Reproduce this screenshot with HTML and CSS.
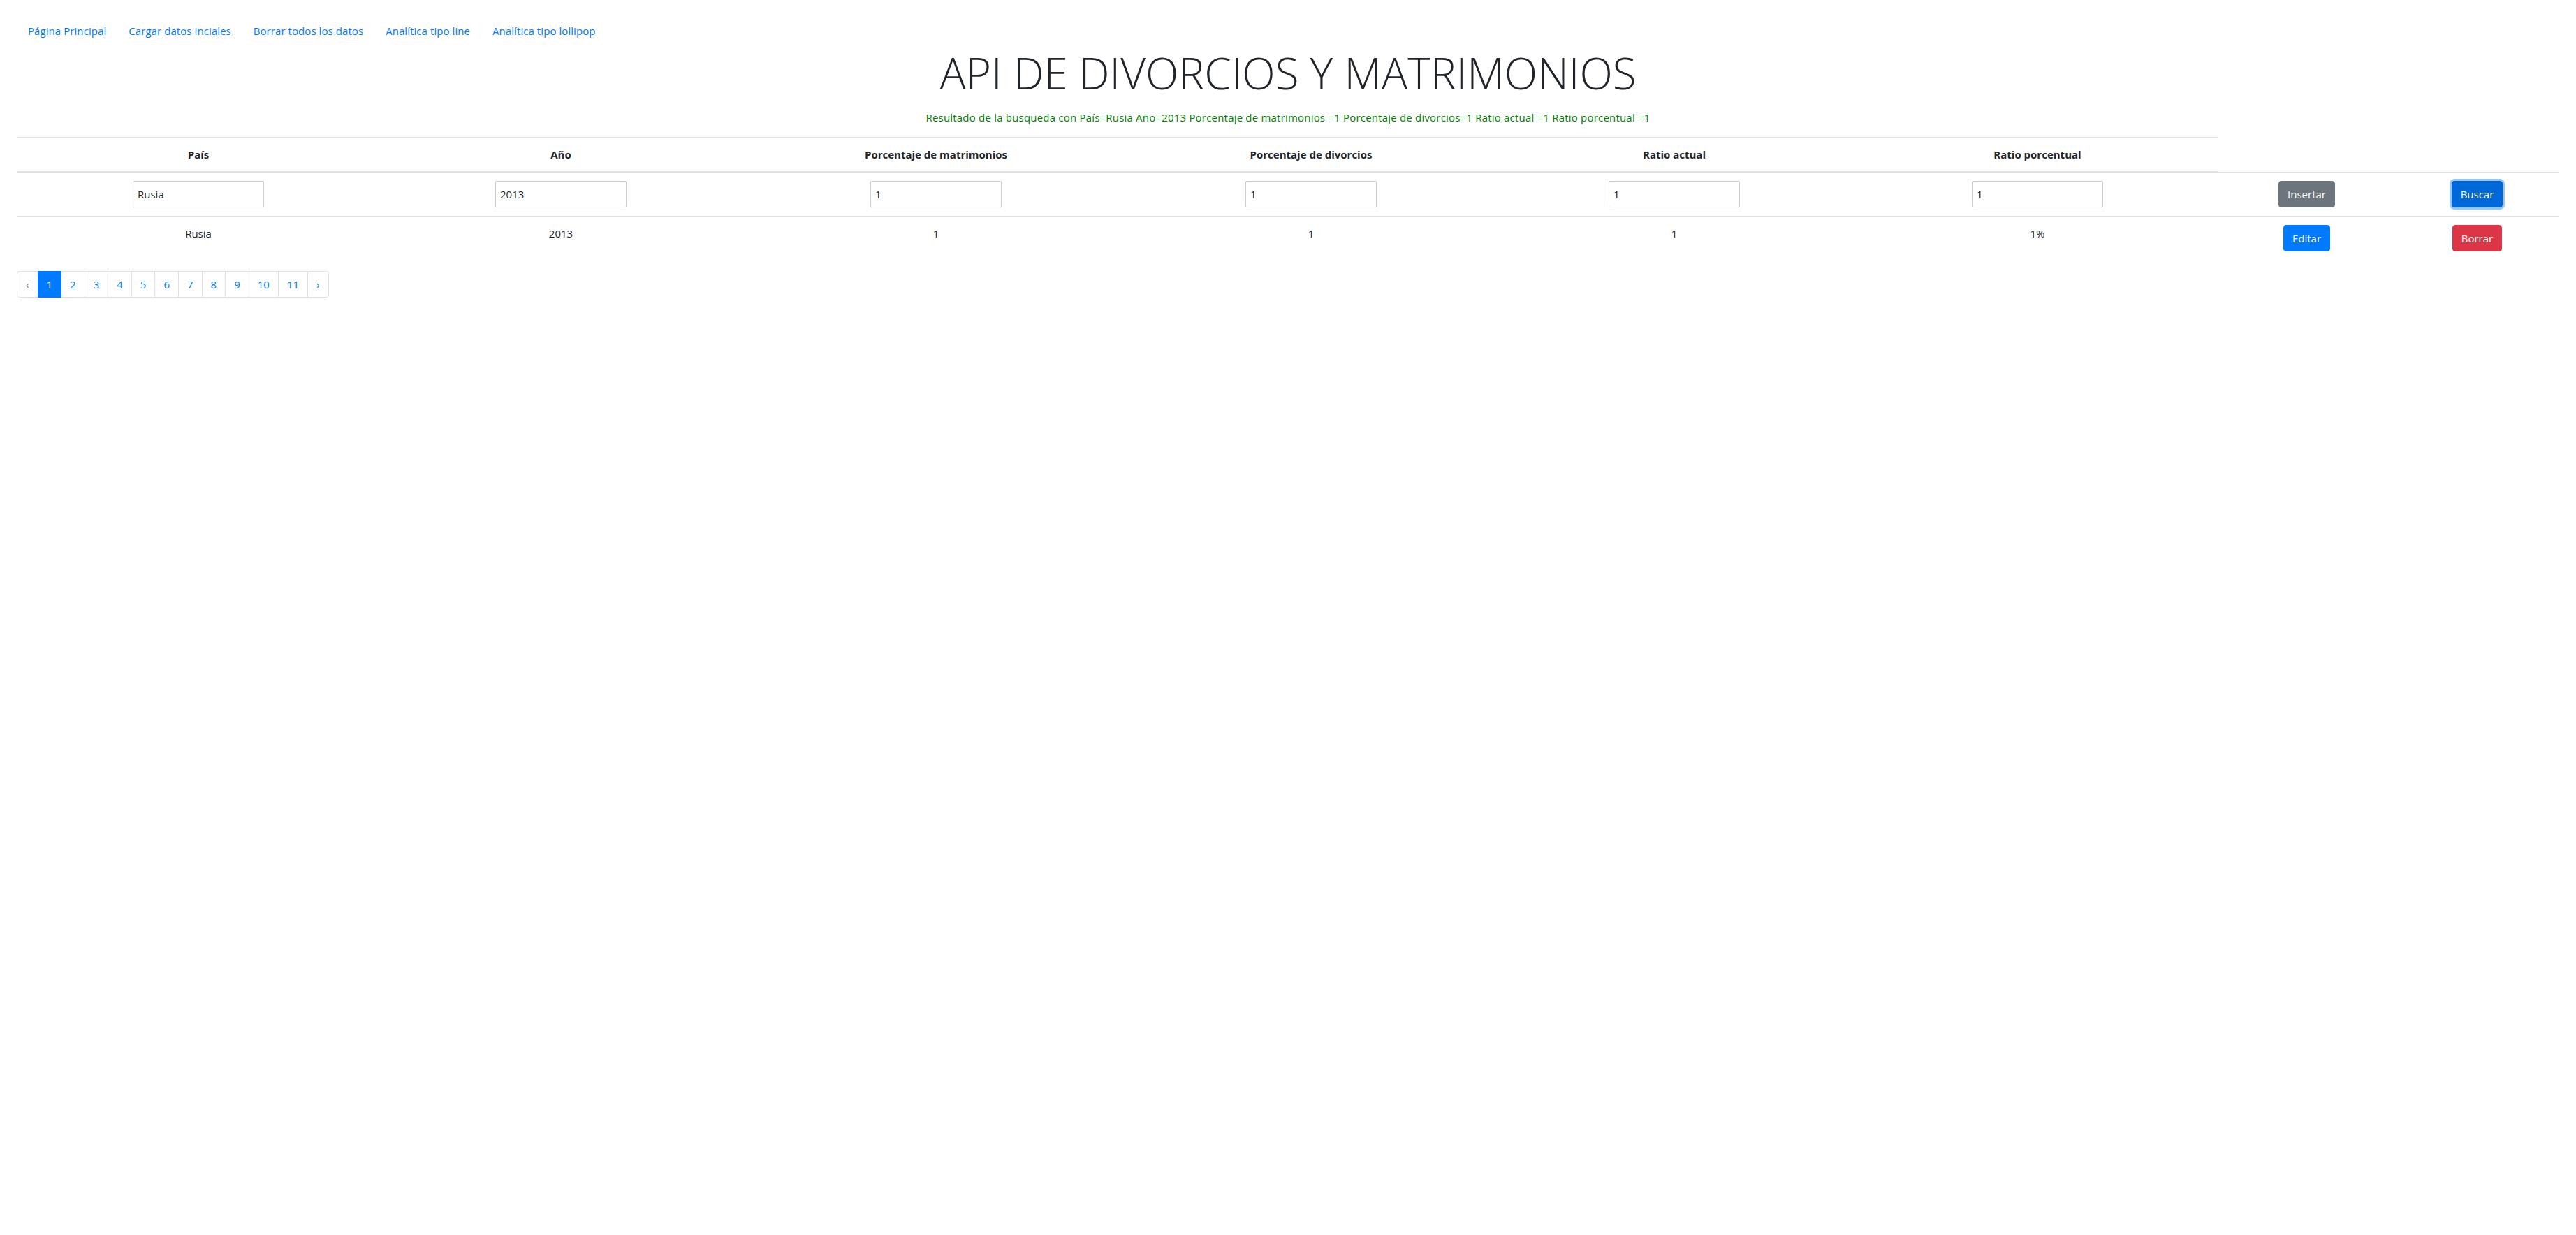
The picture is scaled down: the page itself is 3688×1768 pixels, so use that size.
FILE: index.html
```html
<!DOCTYPE html>
<html lang="es">
<head>
<meta charset="utf-8">
<title>API de divorcios y matrimonios</title>
<link rel="stylesheet" href="styles.css">
</head>
<body>
<main class="page">
  <nav class="nav">
    <a class="nav-link" href="#">Página Principal</a>
    <a class="nav-link" href="#">Cargar datos inciales</a>
    <a class="nav-link" href="#">Borrar todos los datos</a>
    <a class="nav-link" href="#">Analítica tipo line</a>
    <a class="nav-link" href="#">Analítica tipo lollipop</a>
  </nav>

  <h1 class="title">API DE DIVORCIOS Y MATRIMONIOS</h1>
  <p class="result">Resultado de la busqueda con País=Rusia Año=2013 Porcentaje de matrimonios =1 Porcentaje de divorcios=1 Ratio actual =1 Ratio porcentual =1</p>

  <table class="data-table">
    <colgroup>
      <col class="col-pais">
      <col class="col-anio">
      <col class="col-mat">
      <col class="col-div">
      <col class="col-ract">
      <col class="col-rpor">
      <col class="col-act1">
      <col class="col-act2">
    </colgroup>
    <thead>
      <tr>
        <th>País</th>
        <th>Año</th>
        <th>Porcentaje de matrimonios</th>
        <th>Porcentaje de divorcios</th>
        <th>Ratio actual</th>
        <th>Ratio porcentual</th>
      </tr>
    </thead>
    <tbody>
      <tr>
        <td><input class="field" type="text" value="Rusia"></td>
        <td><input class="field" type="text" value="2013"></td>
        <td><input class="field" type="text" value="1"></td>
        <td><input class="field" type="text" value="1"></td>
        <td><input class="field" type="text" value="1"></td>
        <td><input class="field" type="text" value="1"></td>
        <td><button class="btn btn-secondary" type="button">Insertar</button></td>
        <td><button class="btn btn-primary btn-focus" type="button">Buscar</button></td>
      </tr>
      <tr>
        <td>Rusia</td>
        <td>2013</td>
        <td>1</td>
        <td>1</td>
        <td>1</td>
        <td>1%</td>
        <td><button class="btn btn-primary" type="button">Editar</button></td>
        <td><button class="btn btn-danger" type="button">Borrar</button></td>
      </tr>
    </tbody>
  </table>

  <ul class="pagination">
    <li class="page-item disabled"><a class="page-link" href="#">‹</a></li>
    <li class="page-item active"><a class="page-link" href="#">1</a></li>
    <li class="page-item"><a class="page-link" href="#">2</a></li>
    <li class="page-item"><a class="page-link" href="#">3</a></li>
    <li class="page-item"><a class="page-link" href="#">4</a></li>
    <li class="page-item"><a class="page-link" href="#">5</a></li>
    <li class="page-item"><a class="page-link" href="#">6</a></li>
    <li class="page-item"><a class="page-link" href="#">7</a></li>
    <li class="page-item"><a class="page-link" href="#">8</a></li>
    <li class="page-item"><a class="page-link" href="#">9</a></li>
    <li class="page-item"><a class="page-link" href="#">10</a></li>
    <li class="page-item"><a class="page-link" href="#">11</a></li>
    <li class="page-item"><a class="page-link" href="#">›</a></li>
  </ul>
</main>
</body>
</html>
```

FILE: styles.css
```css
* {
  box-sizing: border-box;
}

html, body {
  margin: 0;
  padding: 0;
  background: #fff;
}

body {
  font-family: "Open Sans", "Noto Sans", sans-serif;
  font-size: 15px;
  line-height: 24px;
  color: #212529;
}

.page {
  padding: 24px 24px 0 24px;
}

/* navigation */
.nav {
  display: flex;
  flex-wrap: wrap;
}

.nav-link {
  display: block;
  padding: 8px 16px;
  line-height: 24px;
  letter-spacing: 0.07px;
  color: #007bff;
  text-decoration: none;
}

/* heading */
.title {
  margin: 3px 0 0 0;
  font-size: 62px;
  font-weight: 300;
  line-height: 1.2;
  text-align: center;
  color: #212529;
}

.result {
  margin: 15px 0 16px 0;
  text-align: center;
  letter-spacing: 0.2px;
  color: #008000;
}

/* table */
.data-table {
  width: 100%;
  border-collapse: collapse;
  table-layout: fixed;
  margin-bottom: 16px;
  color: #212529;
}

.col-pais { width: 520px; }
.col-anio { width: 518px; }
.col-mat  { width: 556px; }
.col-div  { width: 518px; }
.col-ract { width: 522px; }
.col-rpor { width: 518px; }
.col-act1 { width: 253px; }
.col-act2 { width: 235px; }

.data-table th,
.data-table td {
  padding: 12px;
  border-top: 1px solid #dee2e6;
  text-align: center;
  vertical-align: top;
  line-height: 24px;
}

.data-table thead th {
  font-weight: 700;
  border-bottom: 2px solid #dee2e6;
}

.field {
  display: inline-block;
  vertical-align: top;
  width: 188px;
  height: 38px;
  margin: 0;
  padding: 0 6px;
  border: 1px solid #ccc;
  border-radius: 2px;
  font-family: inherit;
  font-size: 15px;
  color: #212529;
  background: #fff;
}

/* buttons */
.btn {
  display: inline-block;
  vertical-align: top;
  height: 38px;
  margin: 0;
  padding: 0 12px;
  border: 1px solid transparent;
  border-radius: 4px;
  font-family: inherit;
  font-size: 15px;
  line-height: 36px;
  color: #fff;
  cursor: pointer;
}

.btn-secondary {
  background: #6c757d;
  border-color: #6c757d;
}

.btn-primary {
  background: #007bff;
  border-color: #007bff;
}

.btn-focus {
  background: #0069d9;
  border-color: #0062cc;
  box-shadow: 0 0 0 3px rgba(38, 143, 255, 0.5);
}

.btn-danger {
  background: #dc3545;
  border-color: #dc3545;
}

/* pagination */
.pagination {
  display: flex;
  list-style: none;
  margin: 0;
  padding: 0;
}

.page-link {
  display: block;
  margin-left: -1px;
  padding: 8px 12px;
  line-height: 20px;
  border: 1px solid #dee2e6;
  color: #007bff;
  background: #fff;
  text-decoration: none;
}

.page-item:first-child .page-link {
  margin-left: 0;
  border-radius: 4px 0 0 4px;
}

.page-item:last-child .page-link {
  border-radius: 0 4px 4px 0;
}

.page-item.disabled .page-link {
  color: #6c757d;
}

.page-item.active .page-link {
  position: relative;
  z-index: 1;
  color: #fff;
  background: #007bff;
  border-color: #007bff;
}
```
